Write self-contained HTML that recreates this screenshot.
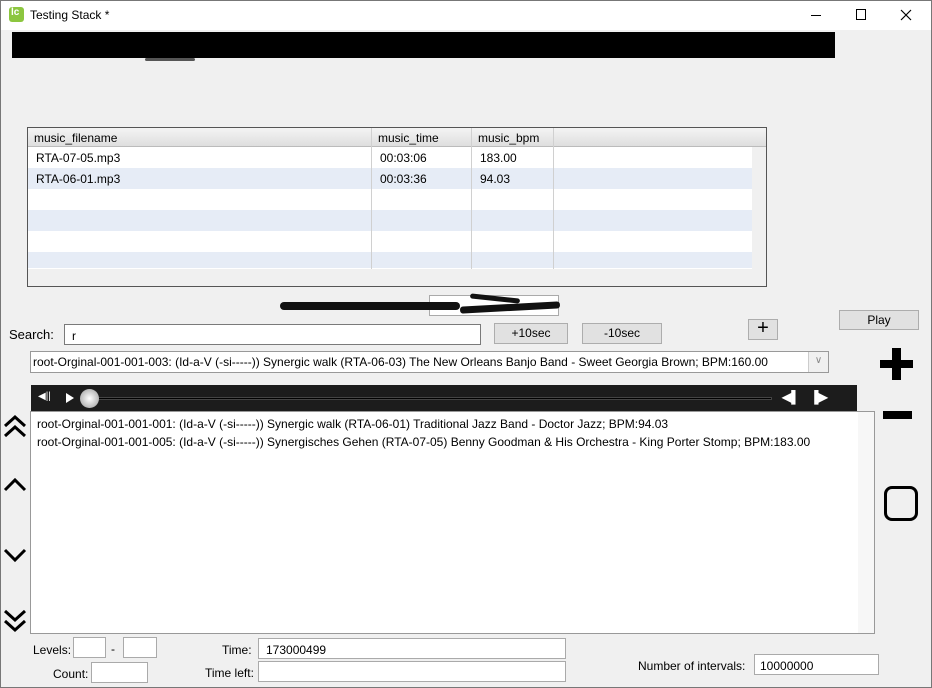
<!DOCTYPE html>
<html><head><meta charset="utf-8"><style>
*{box-sizing:border-box;margin:0;padding:0}
body{width:932px;height:688px;background:#f0f0f0;font-family:"Liberation Sans",sans-serif;font-size:12px;color:#000;position:relative;overflow:hidden}
.a{position:absolute}
.in{position:absolute;background:#fff;border:1px solid #7a7a7a}
.btn{position:absolute;background:#e1e1e1;border:1px solid #adadad;text-align:center;font-size:12px}
.t{position:absolute;white-space:nowrap}
</style></head><body>
<div class="a" style="left:0;top:0;width:932px;height:688px;border:1px solid #777;z-index:5"></div>
<div class="a" style="left:0;top:0;width:932px;height:30px;background:#fff"></div>
<div class="a" style="left:9px;top:7px;width:15px;height:15px;background:#8cc63f;border-radius:3px"></div>
<div class="t" style="left:11px;top:7px;color:#fff;font-size:10px;font-weight:bold">lc</div>
<div class="t" style="left:30px;top:8px;font-size:12px">Testing Stack *</div>
<div class="a" style="left:811px;top:15px;width:10px;height:1px;background:#000"></div>
<div class="a" style="left:856px;top:9px;width:10px;height:11px;border:1px solid #000"></div>
<svg class="a" style="left:900px;top:9px" width="12" height="12"><path d="M1 1L11 11M11 1L1 11" stroke="#000" stroke-width="1.2"/></svg>
<div class="a" style="left:12px;top:32px;width:823px;height:26px;background:#000"></div>
<div class="a" style="left:145px;top:58px;width:50px;height:3px;background:#555;border-radius:2px"></div>

<!-- table -->
<div class="a" style="left:27px;top:127px;width:740px;height:160px;border:1px solid #555;background:#fff"></div>
<div class="a" style="left:28px;top:128px;width:738px;height:19px;background:linear-gradient(#f4f4f4,#dedede);border-bottom:1px solid #bbb"></div>
<div class="t" style="left:34px;top:131px">music_filename</div>
<div class="t" style="left:378px;top:131px">music_time</div>
<div class="t" style="left:478px;top:131px">music_bpm</div>
<div class="a" style="left:28px;top:168px;width:724px;height:21px;background:#e6ecf6"></div>
<div class="a" style="left:28px;top:210px;width:724px;height:21px;background:#e6ecf6"></div>
<div class="a" style="left:28px;top:252px;width:724px;height:16px;background:#e6ecf6"></div>
<div class="a" style="left:371px;top:128px;width:1px;height:141px;background:#d0d0d0"></div>
<div class="a" style="left:471px;top:128px;width:1px;height:141px;background:#d0d0d0"></div>
<div class="a" style="left:553px;top:128px;width:1px;height:141px;background:#d0d0d0"></div>
<div class="t" style="left:36px;top:151px">RTA-07-05.mp3</div>
<div class="t" style="left:380px;top:151px">00:03:06</div>
<div class="t" style="left:480px;top:151px">183.00</div>
<div class="t" style="left:36px;top:172px">RTA-06-01.mp3</div>
<div class="t" style="left:380px;top:172px">00:03:36</div>
<div class="t" style="left:480px;top:172px">94.03</div>
<div class="a" style="left:752px;top:147px;width:14px;height:139px;background:#f0f0f0"></div>
<div class="a" style="left:28px;top:269px;width:724px;height:17px;background:#f0f0f0"></div>

<!-- redacted middle -->
<div class="in" style="left:429px;top:295px;width:130px;height:21px;border-color:#aaa"></div>
<div class="a" style="left:280px;top:302px;width:180px;height:8px;background:#111;border-radius:4px"></div>
<div class="a" style="left:470px;top:296px;width:50px;height:5px;background:#111;border-radius:3px;transform:rotate(6deg)"></div>
<div class="a" style="left:460px;top:304px;width:100px;height:7px;background:#111;border-radius:3px;transform:rotate(-3deg)"></div>

<div class="t" style="left:9px;top:327px;font-size:13px">Search:</div>
<div class="in" style="left:64px;top:324px;width:417px;height:21px"></div>
<div class="t" style="left:72px;top:329px">r</div>
<div class="btn" style="left:494px;top:323px;width:74px;height:21px;line-height:19px">+10sec</div>
<div class="btn" style="left:582px;top:323px;width:80px;height:21px;line-height:19px">-10sec</div>
<div class="btn" style="left:748px;top:319px;width:30px;height:21px;line-height:17px;font-size:20px">+</div>
<div class="btn" style="left:839px;top:310px;width:80px;height:20px;line-height:18px">Play</div>

<div class="in" style="left:30px;top:351px;width:799px;height:22px;border-color:#999"></div>
<div class="t" style="left:33px;top:355px">root-Orginal-001-001-003: (Id-a-V (-si-----)) Synergic walk (RTA-06-03) The New Orleans Banjo Band - Sweet Georgia Brown; BPM:160.00</div>
<div class="a" style="left:808px;top:352px;width:20px;height:20px;background:#f0f0f0;border-left:1px solid #ccc;text-align:center;color:#888;font-size:10px;line-height:18px">∨</div>

<div class="a" style="left:880px;top:360px;width:33px;height:8px;background:#000"></div>
<div class="a" style="left:892px;top:348px;width:9px;height:32px;background:#000"></div>
<div class="a" style="left:883px;top:411px;width:29px;height:8px;background:#000"></div>
<div class="a" style="left:884px;top:486px;width:34px;height:35px;border:3px solid #000;border-radius:8px"></div>

<!-- player -->
<div class="a" style="left:31px;top:385px;width:826px;height:26px;background:#1c1c1c"></div>
<div class="t" style="left:38px;top:391px;color:#fff;font-size:10px">◀||</div>
<svg class="a" style="left:65px;top:392px" width="10" height="12"><path d="M1 1L9 6L1 11Z" fill="#fff"/></svg>
<div class="a" style="left:90px;top:397px;width:682px;height:3px;background:#000;border:1px solid #444"></div>
<div class="a" style="left:80px;top:389px;width:19px;height:19px;border-radius:50%;background:radial-gradient(#fff,#999)"></div>
<div class="t" style="left:782px;top:390px;color:#fff;font-size:12px;font-weight:bold">◀▌</div>
<div class="t" style="left:810px;top:390px;color:#fff;font-size:12px;font-weight:bold">▐▶</div>

<!-- list -->
<div class="in" style="left:30px;top:411px;width:845px;height:223px;border-color:#999"></div>
<div class="a" style="left:858px;top:412px;width:16px;height:221px;background:#f7f7f7"></div>
<div class="t" style="left:37px;top:417px">root-Orginal-001-001-001: (Id-a-V (-si-----)) Synergic walk (RTA-06-01) Traditional Jazz Band - Doctor Jazz; BPM:94.03</div>
<div class="t" style="left:37px;top:435px">root-Orginal-001-001-005: (Id-a-V (-si-----)) Synergisches Gehen (RTA-07-05) Benny Goodman &amp; His Orchestra - King Porter Stomp; BPM:183.00</div>

<svg class="a" style="left:2px;top:412px" width="28" height="224" fill="none" stroke="#000" stroke-width="3">
<path d="M3 14L13 5L23 14M3 24L13 15L23 24"/>
<path d="M3 78L13 68L23 78"/>
<path d="M3 138L13 148L23 138"/>
<path d="M3 199L13 208L23 199M3 209L13 218L23 209"/>
</svg>

<!-- bottom -->
<div class="t" style="left:33px;top:643px">Levels:</div>
<div class="in" style="left:73px;top:637px;width:33px;height:21px;border-color:#aaa"></div>
<div class="t" style="left:111px;top:642px">-</div>
<div class="in" style="left:123px;top:637px;width:34px;height:21px;border-color:#aaa"></div>
<div class="t" style="left:53px;top:667px">Count:</div>
<div class="in" style="left:91px;top:662px;width:57px;height:21px;border-color:#aaa"></div>
<div class="t" style="left:222px;top:643px">Time:</div>
<div class="in" style="left:258px;top:638px;width:308px;height:21px;border-color:#aaa"></div>
<div class="t" style="left:266px;top:643px">173000499</div>
<div class="t" style="left:205px;top:666px">Time left:</div>
<div class="in" style="left:258px;top:661px;width:308px;height:21px;border-color:#aaa"></div>
<div class="t" style="left:638px;top:659px">Number of intervals:</div>
<div class="in" style="left:754px;top:654px;width:125px;height:21px;border-color:#aaa"></div>
<div class="t" style="left:760px;top:659px">10000000</div>
</body></html>
